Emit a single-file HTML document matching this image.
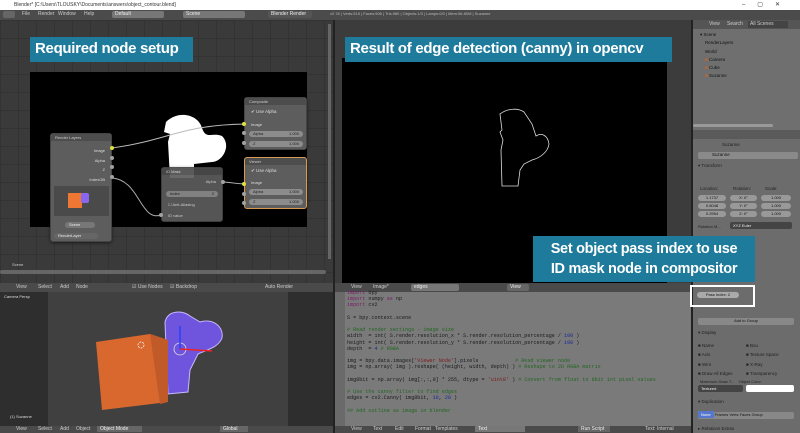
<!DOCTYPE html>
<html><head><meta charset="utf-8"><style>
*{margin:0;padding:0;box-sizing:border-box}
body{width:800px;height:433px;overflow:hidden;background:#393939;font-family:"Liberation Sans",sans-serif;position:relative;font-size:5px;color:#ddd}
.a{position:absolute}
.hdr{background:#4a4a4a;height:9px}
.hdr span{position:absolute;top:1px;font-size:5px;color:#ccc}
.grid{background-color:#3a3a3a;background-image:linear-gradient(#333 1px,transparent 1px),linear-gradient(90deg,#333 1px,transparent 1px);background-size:18px 18px}
.lbl{background:#1f7b9c;color:#fff;font-weight:bold;font-size:15px;padding:3px 5px;white-space:nowrap;letter-spacing:-0.3px}
.node{background:#5d5d5d;border-radius:3px;border:1px solid #444;box-shadow:0 1px 3px #0008}
.node .t{background:#4d4d4d;height:7px;border-radius:3px 3px 0 0;font-size:4px;padding:1px 4px;color:#ccc}
.fld{position:absolute;background:#8c8c8c;border-radius:4px;height:6px;font-size:4px;color:#222;padding:0 4px;line-height:6px}
.sk{position:absolute;width:4px;height:4px;border-radius:50%;background:#a1a1a1}
.y{background:#e0e040}
.code{font-family:"Liberation Mono",monospace;font-size:5.1px;line-height:6.2px;color:#1a1a1a;white-space:pre}
.c{color:#226622}.k{color:#7a1a6a}.n{color:#1a2a99}.s{color:#7a1a1a}
.prop{font-size:4.5px;color:#222}
.pf{position:absolute;background:#999;border-radius:3px;height:6px;font-size:4px;color:#111;text-align:center;line-height:6px}
</style></head><body>
<div class="a" style="left:0;top:0;width:800px;height:10px;background:#fff;font-size:5px;color:#333;padding:2px 14px">Blender* [C:\Users\TLOUSKY\Documents\answers\object_contour.blend]
<span style="position:absolute;right:8px;top:1px;font-size:6px;letter-spacing:12px">–▢✕</span></div>
<div class="a hdr" style="left:0;top:10px;width:800px;height:10px;background:#4b4b4b">
<span style="left:3px;width:12px;height:7px;background:#666;border-radius:2px"></span>
<span style="left:22px">File</span><span style="left:38px">Render</span><span style="left:58px">Window</span><span style="left:84px">Help</span>
<span style="left:112px;top:1px;width:52px;height:7px;background:#777;border-radius:2px;color:#eee;padding-left:3px">Default</span>
<span style="left:183px;top:1px;width:62px;height:7px;background:#777;border-radius:2px;color:#eee;padding-left:3px">Scene</span>
<span style="left:268px;top:1px;width:44px;height:7px;background:#555;border-radius:2px;color:#eee;padding-left:3px">Blender Render</span>
<span style="left:330px;color:#bbb;font-size:4px">v2.78 | Verts:515 | Faces:506 | Tris:980 | Objects:1/3 | Lamps:0/0 | Mem:56.80M | Suzanne</span>
</div>
<div class="a grid" style="left:0;top:20px;width:333px;height:263px"></div>
<div class="a" style="left:30px;top:72px;width:277px;height:155px;background:#000"></div>
<div class="a" style="left:0;top:270px;width:326px;height:4px;background:#666;border-radius:2px"></div>
<div class="a" style="left:328px;top:24px;width:3px;height:235px;background:#666"></div>
<div class="a" style="left:12px;top:262px;color:#ccc;font-size:4px">Scene</div>
<div class="a lbl" style="left:30px;top:37px;height:25px;width:163px">Required node setup</div>
<svg class="a" style="left:150px;top:110px" width="90" height="75"><path d="M16 12 C28 0 48 4 52 18 C56 30 62 22 72 26 C82 36 72 52 62 52 L44 54 L44 68 L20 68 L18 32 L20 24 L14 22 Z" fill="#fff"/></svg>
<svg class="a" style="left:0;top:0" width="333" height="283"><g fill="none" stroke="#bbb" stroke-width="1">
<path d="M112 148 C170 140 180 125 246 124"/><path d="M112 178 C140 180 140 222 161 215" stroke="#aaa"/><path d="M222 182 C232 182 234 184 246 184"/></g></svg>
<div class="a node" style="left:50px;top:133px;width:62px;height:109px"><div class="t">Render Layers</div>
<div class="a" style="right:6px;top:14px;font-size:4px">Image</div><div class="a" style="right:6px;top:24px;font-size:4px">Alpha</div><div class="a" style="right:6px;top:33px;font-size:4px">Z</div><div class="a" style="right:6px;top:43px;font-size:4px">IndexOB</div>
<div class="a" style="left:3px;top:52px;width:55px;height:30px;background:#4a4a4a"></div>
<div class="a" style="left:17px;top:59px;width:14px;height:15px;background:#ee7733"></div><div class="a" style="left:30px;top:59px;width:8px;height:10px;background:#8866ee;border-radius:2px"></div>
<div class="fld" style="left:14px;top:88px;width:30px;background:#777;color:#eee">Scene</div>
<div class="fld" style="left:3px;top:99px;width:44px;background:#666;color:#eee">RenderLayer</div></div>
<div class="sk y" style="left:110px;top:146px"></div><div class="sk" style="left:110px;top:156px"></div><div class="sk" style="left:110px;top:165px"></div><div class="sk" style="left:110px;top:175px"></div>
<div class="a node" style="left:161px;top:167px;width:62px;height:55px;opacity:.92"><div class="t">ID Mask</div>
<div class="a" style="right:6px;top:11px;font-size:4px">Alpha</div>
<div class="fld" style="left:4px;top:23px;width:52px">Index<span style="float:right">2</span></div>
<div class="a" style="left:6px;top:34px;font-size:4px">☐ Anti-Aliasing</div><div class="a" style="left:6px;top:45px;font-size:4px">ID value</div></div>
<div class="sk" style="left:159px;top:213px"></div><div class="sk" style="left:221px;top:180px"></div>
<div class="a node" style="left:244px;top:97px;width:63px;height:53px"><div class="t">Composite</div>
<div class="a" style="left:6px;top:11px;font-size:4.5px">✔ Use Alpha</div><div class="a" style="left:6px;top:24px;font-size:4px">Image</div>
<div class="fld" style="left:4px;top:33px;width:54px">Alpha<span style="float:right">1.000</span></div>
<div class="fld" style="left:4px;top:43px;width:54px">Z<span style="float:right">1.000</span></div></div>
<div class="sk y" style="left:242px;top:122px"></div><div class="sk" style="left:242px;top:131px"></div><div class="sk" style="left:242px;top:141px"></div>
<div class="a node" style="left:244px;top:157px;width:63px;height:52px;border-color:#d89a50"><div class="t">Viewer</div>
<div class="a" style="left:6px;top:10px;font-size:4.5px">✔ Use Alpha</div><div class="a" style="left:6px;top:22px;font-size:4px">Image</div>
<div class="fld" style="left:4px;top:31px;width:54px">Alpha<span style="float:right">1.000</span></div>
<div class="fld" style="left:4px;top:41px;width:54px">Z<span style="float:right">1.000</span></div></div>
<div class="sk y" style="left:242px;top:182px"></div><div class="sk" style="left:242px;top:192px"></div><div class="sk" style="left:242px;top:201px"></div>
<div class="a hdr" style="left:0;top:283px;width:335px">
<span style="left:16px">View</span><span style="left:38px">Select</span><span style="left:60px">Add</span><span style="left:76px">Node</span>
<span style="left:132px">☑ Use Nodes</span><span style="left:170px">☑ Backdrop</span><span style="left:265px">Auto Render</span></div>
<div class="a" style="left:335px;top:20px;width:358px;height:263px;background:#3c3c3c"></div>
<div class="a" style="left:342px;top:58px;width:325px;height:225px;background:#000"></div>
<svg class="a" style="left:480px;top:100px" width="80" height="100"><path d="M20 14 C28 8 38 8 44 12 L52 24 L56 36 C62 32 68 36 69 44 C68 52 60 58 52 60 L44 64 L40 70 L38 86 L22 86 L21 50 L23 40 L20 32 L22 30 Z" fill="none" stroke="#ddd" stroke-width="0.8"/></svg>
<div class="a lbl" style="left:345px;top:37px;height:25px;width:327px">Result of edge detection (canny) in opencv</div>
<div class="a hdr" style="left:335px;top:283px;width:358px">
<span style="left:16px">View</span><span style="left:38px">Image*</span>
<span style="left:76px;width:48px;height:7px;background:#777;border-radius:2px;padding-left:3px;color:#eee">edges</span>
<span style="left:172px;width:22px;height:7px;background:#666;border-radius:2px;color:#eee;padding-left:3px">View</span></div>
<div class="a" style="left:335px;top:292px;width:358px;height:134px;background:#7a7a7a"></div>
<div class="a" style="left:335px;top:292px;width:10px;height:134px;background:#6a6a6a"></div>
<div class="a code" style="left:347px;top:290px"><span class="k">import</span> bpy
<span class="k">import</span> numpy <span class="k">as</span> np
<span class="k">import</span> cv2

S = bpy.context.scene

<span class="c"># Read render settings - image size</span>
width  = int( S.render.resolution_x * S.render.resolution_percentage / <span class="n">100</span> )
height = int( S.render.resolution_y * S.render.resolution_percentage / <span class="n">100</span> )
depth  = <span class="n">4</span> <span class="c"># RGBA</span>

img = bpy.data.images[<span class="s">'Viewer Node'</span>].pixels            <span class="c"># Read viewer node</span>
img = np.array( img ).reshape( (height, width, depth) ) <span class="c"># Reshape to 2D RGBA matrix</span>

img8bit = np.array( img[:,:,0] * 255, dtype = <span class="s">'uint8'</span> ) <span class="c"># Convert from float to 8bit int pixel values</span>

<span class="c"># Use the canny filter to find edges</span>
edges = cv2.Canny( img8bit, <span class="n">10</span>, <span class="n">20</span> )

<span class="c">## Add outline as image in blender</span></div>
<div class="a hdr" style="left:335px;top:426px;width:358px;height:7px">
<span style="left:16px;top:0">View</span><span style="left:38px;top:0">Text</span><span style="left:60px;top:0">Edit</span><span style="left:80px;top:0">Format</span><span style="left:100px;top:0">Templates</span>
<span style="left:140px;top:0;width:50px;height:6px;background:#777;color:#eee;padding-left:3px">Text</span>
<span style="left:243px;top:0;width:32px;height:6px;background:#666;color:#eee;padding-left:3px">Run Script</span><span style="left:310px;top:0">Text: Internal</span></div>
<div class="a" style="left:0;top:292px;width:333px;height:134px;background:#2e2e2e"></div>
<div class="a" style="left:48px;top:292px;width:240px;height:134px;background:#404040"></div>
<div class="a" style="left:4px;top:294px;color:#ddd;font-size:4px">Camera Persp</div>
<div class="a" style="left:10px;top:414px;color:#ddd;font-size:4px">(1) Suzanne</div>
<svg class="a" style="left:0;top:292px" width="333" height="134">
<path d="M165 30 C168 18 182 18 190 24 L200 30 C212 26 224 34 222 46 C218 56 206 58 198 62 L190 78 L188 100 L168 102 Z" fill="#6f55dd" stroke="#c9b8ff" stroke-width="1"/>
<path d="M96 50 L150 42 L168 48 L168 110 L102 118 Z" fill="#d9682f"/>
<path d="M150 42 L168 48 L168 110 L160 112 Z" fill="#c05a28"/>
<circle cx="180" cy="57" r="6" fill="none" stroke="#ddd" stroke-width=".8"/>
<line x1="180" y1="57" x2="180" y2="34" stroke="#2244ff" stroke-width="1.5"/>
<line x1="180" y1="57" x2="212" y2="59" stroke="#e22" stroke-width="1.5"/>
<circle cx="141" cy="53" r="3" fill="none" stroke="#fff" stroke-dasharray="2 1" stroke-width=".7"/>
</svg>
<div class="a hdr" style="left:0;top:426px;width:335px;height:7px">
<span style="left:16px;top:0">View</span><span style="left:38px;top:0">Select</span><span style="left:60px;top:0">Add</span><span style="left:76px;top:0">Object</span>
<span style="left:97px;top:0;width:45px;height:6px;background:#666;color:#eee;padding-left:3px">Object Mode</span>
<span style="left:220px;top:0;width:28px;height:6px;background:#666;color:#eee;padding-left:3px">Global</span></div>
<div class="a" style="left:333px;top:20px;width:2px;height:413px;background:#222"></div>
<div class="a" style="left:691px;top:20px;width:2px;height:413px;background:#222"></div>
<div class="a" style="left:693px;top:20px;width:107px;height:110px;background:#6f6f6f"></div>
<div class="a hdr" style="left:693px;top:20px;width:107px;background:#555">
<span style="left:16px">View</span><span style="left:34px">Search</span><span style="left:55px;width:40px;height:7px;background:#444;padding-left:2px">All Scenes</span></div>
<div class="a prop" style="left:700px;top:31px;line-height:8.3px;color:#111">▾ Scene<br>&nbsp;&nbsp;&nbsp;&nbsp;RenderLayers<br>&nbsp;&nbsp;&nbsp;&nbsp;World<br>&nbsp;&nbsp;&nbsp;&nbsp;<span style="color:#c62">■</span> Camera<br>&nbsp;&nbsp;&nbsp;&nbsp;<span style="color:#c62">■</span> Cube<br>&nbsp;&nbsp;&nbsp;&nbsp;<span style="color:#c62">■</span> Suzanne</div>
<div class="a" style="left:693px;top:124px;width:80px;height:3px;background:#999;border-radius:2px"></div>
<div class="a" style="left:693px;top:130px;width:107px;height:303px;background:#6c6c6c"></div>
<div class="a" style="left:693px;top:130px;width:107px;height:9px;background:#5a5a5a"></div>
<div class="a prop" style="left:722px;top:142px">Suzanne</div>
<div class="a" style="left:698px;top:152px;width:100px;height:7px;background:#8a8a8a;border-radius:2px;font-size:4.5px;color:#111;padding-left:14px">Suzanne</div>
<div class="a prop" style="left:698px;top:163px">▾ Transform</div>
<div class="a prop" style="left:700px;top:186px">Location:</div><div class="a prop" style="left:733px;top:186px">Rotation:</div><div class="a prop" style="left:765px;top:186px">Scale:</div>
<div class="pf" style="left:698px;top:195px;width:28px">1.1737</div><div class="pf" style="left:698px;top:203px;width:28px">0.6048</div><div class="pf" style="left:698px;top:211px;width:28px">0.2954</div>
<div class="pf" style="left:730px;top:195px;width:27px">X: 0°</div><div class="pf" style="left:730px;top:203px;width:27px">Y: 0°</div><div class="pf" style="left:730px;top:211px;width:27px">Z: 0°</div>
<div class="pf" style="left:761px;top:195px;width:30px">1.000</div><div class="pf" style="left:761px;top:203px;width:30px">1.000</div><div class="pf" style="left:761px;top:211px;width:30px">1.000</div>
<div class="a prop" style="left:698px;top:224px;font-size:4px">Rotation M...</div><div class="a" style="left:730px;top:222px;width:62px;height:7px;background:#444;border-radius:2px;font-size:4px;color:#eee;padding:1px 3px">XYZ Euler</div>
<div class="a" style="left:690px;top:285px;width:65px;height:22px;border:2px solid #fff"></div>
<div class="pf" style="left:697px;top:292px;width:42px;background:#aaa">Pass Index: 2</div>
<div class="a" style="left:698px;top:318px;width:96px;height:7px;background:#888;border-radius:2px;font-size:4px;color:#111;text-align:center">Add to Group</div>
<div class="a prop" style="left:698px;top:330px">▾ Display</div>
<div class="a prop" style="left:698px;top:341px;line-height:9.3px">■ Name<br>■ Axis<br>■ Wire<br>■ Draw All Edges</div>
<div class="a prop" style="left:746px;top:341px;line-height:9.3px">■ Bou<br>■ Texture Space<br>■ X-Ray<br>■ Transparency</div>
<div class="a prop" style="left:700px;top:379px;font-size:4px">Maximum Draw T...&nbsp;&nbsp;&nbsp;&nbsp;Object Color:</div>
<div class="a" style="left:698px;top:385px;width:45px;height:7px;background:#444;border-radius:2px;font-size:4px;color:#eee;padding:1px 3px">Textured</div>
<div class="a" style="left:746px;top:385px;width:48px;height:7px;background:#fff;border-radius:2px"></div>
<div class="a prop" style="left:698px;top:399px">▾ Duplication</div>
<div class="a" style="left:698px;top:412px;width:96px;height:7px;background:#888;border-radius:2px;font-size:4px;color:#111"><span style="background:#5577cc;color:#fff;padding:1px 3px">None</span> Frames Verts Faces Group</div>
<div class="a prop" style="left:698px;top:426px">▸ Relations Extras</div>
<div class="a lbl" style="left:533px;top:236px;width:222px;height:46px;text-align:center;line-height:20px;padding:3px 0;font-size:14.5px">Set object pass index to use<br>ID mask node in compositor</div>
</body></html>
